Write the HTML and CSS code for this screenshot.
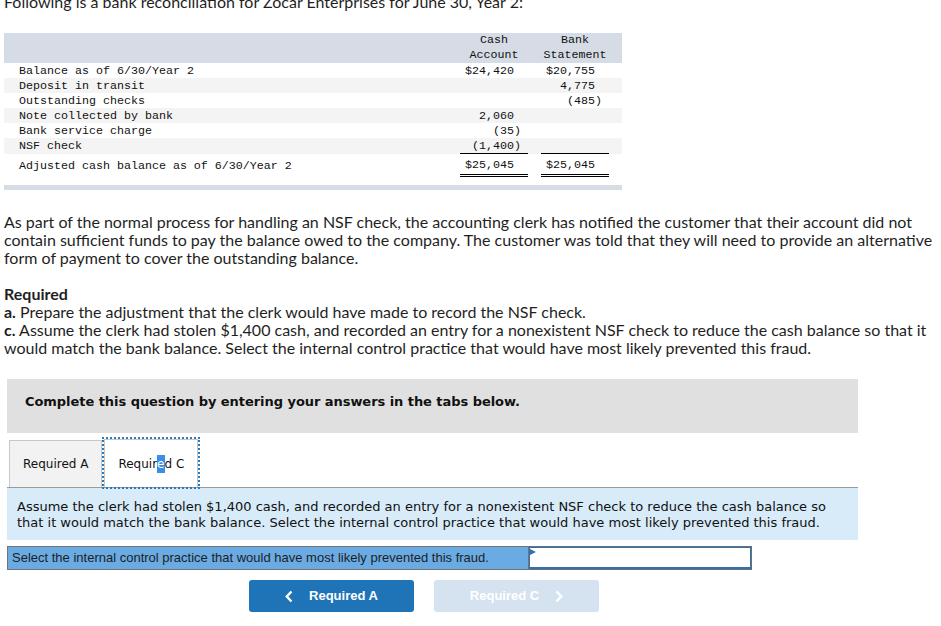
FILE: index.html
```html
<!DOCTYPE html>
<html>
<head>
<meta charset="utf-8">
<link rel="stylesheet" href="styles.css">
</head>
<body>
<div class="page">
  <p class="intro">Following is a bank reconciliation for Zocar Enterprises for June 30, Year 2:</p>

  <div class="recon">
    <table class="recon-table">
      <colgroup>
        <col class="c-label"><col class="c-num"><col class="c-gap"><col class="c-num"><col class="c-gap">
      </colgroup>
      <thead>
        <tr>
          <th></th>
          <th class="hd">Cash<br>Account</th>
          <th></th>
          <th class="hd">Bank<br>Statement</th>
          <th></th>
        </tr>
      </thead>
      <tbody>
        <tr><td class="lbl">Balance as of 6/30/Year 2</td><td class="num">$24,420&nbsp;</td><td></td><td class="num">$20,755&nbsp;</td><td></td></tr>
        <tr class="alt"><td class="lbl">Deposit in transit</td><td class="num"></td><td></td><td class="num">4,775&nbsp;</td><td></td></tr>
        <tr><td class="lbl">Outstanding checks</td><td class="num"></td><td></td><td class="num">(485)</td><td></td></tr>
        <tr class="alt"><td class="lbl">Note collected by bank</td><td class="num">2,060&nbsp;</td><td></td><td class="num"></td><td></td></tr>
        <tr><td class="lbl">Bank service charge</td><td class="num">(35)</td><td></td><td class="num"></td><td></td></tr>
        <tr class="alt"><td class="lbl">NSF check</td><td class="num">(1,400)</td><td></td><td class="num"></td><td></td></tr>
        <tr class="total"><td class="lbl">Adjusted cash balance as of 6/30/Year 2</td><td class="num tot">$25,045&nbsp;</td><td></td><td class="num tot">$25,045&nbsp;</td><td></td></tr>
      </tbody>
    </table>
  </div>

  <p class="body-text">As part of the normal process for handling an NSF check, the accounting clerk has notified the customer that their account did not contain sufficient funds to pay the balance owed to the company. The customer was told that they will need to provide an alternative form of payment to cover the outstanding balance.</p>

  <p class="body-text req"><b>Required</b><br><b>a.</b> Prepare the adjustment that the clerk would have made to record the NSF check.<br><b>c.</b> Assume the clerk had stolen $1,400 cash, and recorded an entry for a nonexistent NSF check to reduce the cash balance so that it would match the bank balance. Select the internal control practice that would have most likely prevented this fraud.</p>

  <div class="question">
    <div class="banner">Complete this question by entering your answers in the tabs below.</div>

    <div class="tabs">
      <div class="tab">Required A</div>
      <div class="tab active">Requir<span class="sel">e</span>d C</div>
    </div>

    <div class="prompt">Assume the clerk had stolen $1,400 cash, and recorded an entry for a nonexistent NSF check to reduce the cash balance so that it would match the bank balance. Select the internal control practice that would have most likely prevented this fraud.</div>

    <div class="answer-row">
      <div class="answer-label">Select the internal control practice that would have most likely prevented this fraud.</div>
      <div class="answer-input"></div>
    </div>

    <div class="nav">
      <div class="btn btn-prev">
        <svg width="8" height="13" viewBox="0 0 8 13"><polyline points="6.5,1.5 1.8,6.5 6.5,11.5" fill="none" stroke="#fff" stroke-width="2.4"/></svg>
        <span>Required A</span>
      </div>
      <div class="btn btn-next">
        <span>Required C</span>
        <svg width="8" height="13" viewBox="0 0 8 13"><polyline points="1.5,1.5 6.2,6.5 1.5,11.5" fill="none" stroke="#fff" stroke-width="2.4"/></svg>
      </div>
    </div>
  </div>
</div>
</body>
</html>
```

FILE: styles.css
```css
html, body {
  margin: 0;
  padding: 0;
  background: #fff;
}

.page {
  padding: 0 4px;
  font-family: Lato, "Liberation Sans", sans-serif;
  font-size: 16px;
  line-height: 18px;
  color: #1f1f1f;
}

.intro {
  margin: -7px 0 22px;
}

.recon {
  width: 618px;
  border-bottom: 5px solid #d5dce6;
  padding-bottom: 8px;
}

.recon-table {
  width: 618px;
  border-collapse: collapse;
  table-layout: fixed;
  font-family: "Liberation Mono", monospace;
  font-size: 11.67px;
  line-height: 13px;
  color: #111;
}

.c-label { width: 456px; }
.c-num { width: 68px; }
.c-gap { width: 13px; }

.recon-table thead tr {
  background: #d5dce6;
}

.recon-table th {
  padding: 0;
  height: 30px;
  line-height: 15px;
  font-weight: normal;
  text-align: center;
  vertical-align: bottom;
}

.recon-table td {
  height: 13px;
  padding: 2px 0 0;
  white-space: pre;
}

.recon-table tr.alt {
  background: #f4f4f4;
}

.lbl {
  padding-left: 15px !important;
}

.num {
  text-align: right;
  padding-right: 7px !important;
}

.total td {
  padding-top: 6px;
  padding-bottom: 2px;
}

.total .tot {
  border-top: 1px solid #000;
  border-bottom: 3px double #000;
  padding-top: 5px;
  padding-bottom: 2px;
}

.body-text {
  margin: 23px 0 0;
}

.req {
  margin-top: 18px;
}

.question {
  margin: 22px 0 0 3px;
  width: 851px;
  font-family: "DejaVu Sans", Verdana, sans-serif;
}

.banner {
  background: #e0e0e0;
  padding: 15px 18px 23px;
  font-size: 13px;
  line-height: 16px;
  font-weight: bold;
  letter-spacing: -0.05px;
  color: #111;
}

.tabs {
  display: flex;
  margin-top: 7px;
  padding-left: 2px;
  gap: 2px;
  border-bottom: 1px solid #9a9a9a;
}

.tab {
  box-sizing: border-box;
  height: 47px;
  padding: 0 13px;
  display: flex;
  align-items: center;
  font-size: 12px;
  color: #111;
  background: #f2f2f2;
  border: 1px solid #c8c8c8;
  border-bottom: none;
}

.tab.active {
  background: #fff;
  outline: 2px dotted #2a7ab9;
  outline-offset: 0;
  height: 48px;
  margin-top: -1px;
}

.sel {
  background: #3a8ee6;
  color: #fff;
}

.prompt {
  background: #d8ebf8;
  padding: 11px 10px 9px;
  font-size: 13px;
  line-height: 16px;
  color: #111;
}

.answer-row {
  display: flex;
  margin-top: 6px;
  height: 24px;
}

.answer-label {
  box-sizing: border-box;
  width: 522px;
  height: 24px;
  background: #6aabe4;
  border: 1px solid #737373;
  padding: 0 4px;
  font-family: "Liberation Sans", Arial, sans-serif;
  font-size: 13px;
  line-height: 22px;
  color: #1e1e1e;
  white-space: nowrap;
}

.answer-input {
  position: relative;
  box-sizing: border-box;
  width: 223px;
  height: 24px;
  background: #fff;
  border: 1px solid #6f6f6f;
  border-left: none;
  box-shadow: inset 0 0 0 1px #2d72b2, inset 0 -2px 0 0 #2d72b2;
}

.answer-input::before {
  content: "";
  position: absolute;
  left: 1px;
  top: 2px;
  border-top: 3px solid transparent;
  border-bottom: 3px solid transparent;
  border-left: 6px solid #2d72b2;
}

.nav {
  display: flex;
  gap: 20px;
  margin-top: 10px;
  padding-left: 242px;
}

.btn {
  box-sizing: border-box;
  width: 165px;
  height: 32px;
  border-radius: 3px;
  display: flex;
  align-items: center;
  justify-content: center;
  gap: 16px;
  font-family: "Liberation Sans", Arial, sans-serif;
  font-weight: bold;
  font-size: 13px;
  color: #fff;
}

.btn svg {
  display: block;
}

.btn-prev {
  background: #1f74b8;
}

.btn-next {
  background: #d5e3f0;
}
```
